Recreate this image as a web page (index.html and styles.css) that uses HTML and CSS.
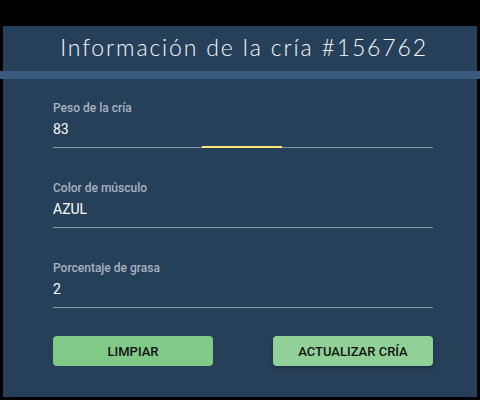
FILE: index.html
```html
<!DOCTYPE html>
<html lang="es">
<head>
<meta charset="utf-8">
<title>Información de la cría</title>
<link rel="stylesheet" href="styles.css">
</head>
<body>
<div class="panel">
  <h1 class="title">Información de la cría #156762</h1>
  <div class="stripe"></div>
  <form class="form">
    <div class="field">
      <label class="label">Peso de la cría</label>
      <div class="value">83</div>
      <span class="focus-bar"></span>
    </div>
    <div class="field">
      <label class="label">Color de músculo</label>
      <div class="value">AZUL</div>
    </div>
    <div class="field">
      <label class="label">Porcentaje de grasa</label>
      <div class="value">2</div>
    </div>
    <div class="actions">
      <button type="button" class="btn">LIMPIAR</button>
      <button type="button" class="btn btn-hover">ACTUALIZAR CRÍA</button>
    </div>
  </form>
</div>
</body>
</html>
```
FILE: styles.css
```css
html, body {
  margin: 0;
  padding: 0;
  background: #000;
  width: 480px;
  height: 400px;
  overflow: hidden;
}
.panel {
  margin: 26px 3px 0 3px;
  height: 371px;
  background: #27405a;
  font-family: Roboto, "Noto Sans", sans-serif;
}
.title {
  margin: 0;
  height: 45px;
  box-sizing: border-box;
  padding: 7px 0 0 8px;
  text-align: center;
  font-family: Lato, sans-serif;
  font-weight: 300;
  font-size: 23px;
  line-height: 28px;
  color: #f4f8ff;
  letter-spacing: 1.85px;
}
.stripe {
  height: 8px;
  margin: 0 -3px;
  background: #3a5a7e;
}
.form {
  padding: 0 44px 0 50px;
  display: flex;
  flex-direction: column;
}
.field {
  position: relative;
  display: flex;
  flex-direction: column;
  margin-top: 33px;
  border-bottom: 1px solid #8394a8;
  padding-bottom: 8px;
}
.field:first-child {
  margin-top: 22px;
}
.label {
  font-size: 12px;
  line-height: 15px;
  font-weight: 500;
  color: #a8b3c0;
}
.value {
  margin-top: 3px;
  font-size: 14px;
  line-height: 20px;
  color: #ffffff;
}
.focus-bar {
  position: absolute;
  left: 149px;
  width: 80px;
  bottom: -1px;
  height: 2px;
  background: #ffe873;
}
.actions {
  display: flex;
  justify-content: space-between;
  margin-top: 28px;
}
.btn {
  width: 160px;
  height: 30px;
  border: none;
  border-radius: 4px;
  background: #80c987;
  color: #111;
  font-family: Roboto, sans-serif;
  font-weight: 500;
  font-size: 13px;
  padding: 0;
  cursor: pointer;
}
.btn-hover {
  background: #91d197;
  box-shadow: 0 2px 4px rgba(0, 0, 0, 0.3);
}
```
